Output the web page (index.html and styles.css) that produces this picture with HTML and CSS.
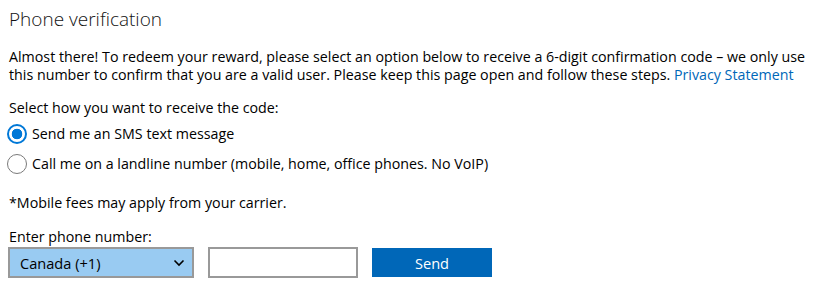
FILE: index.html
```html
<!DOCTYPE html>
<html>
<head>
<meta charset="utf-8">
<link rel="stylesheet" href="styles.css">
</head>
<body>
<div class="page">
  <h1 class="title">Phone verification</h1>
  <p class="intro">Almost there! To redeem your reward, please select an option below to receive a 6-digit confirmation code – we only use this number to confirm that you are a valid user. Please keep this page open and follow these steps. <a class="link" href="#">Privacy Statement</a></p>
  <p class="label">Select how you want to receive the code:</p>
  <div class="options">
    <label class="option"><span class="radio checked"></span><span>Send me an SMS text message</span></label>
    <label class="option"><span class="radio"></span><span>Call me on a landline number (mobile, home, office phones. No VoIP)</span></label>
  </div>
  <p class="note">*Mobile fees may apply from your carrier.</p>
  <p class="label small">Enter phone number:</p>
  <div class="form-row">
    <div class="select"><span>Canada (+1)</span><svg class="chev" width="12" height="8" viewBox="0 0 12 8"><path d="M1.5 1.5 L6 6 L10.5 1.5" fill="none" stroke="#000" stroke-width="1.6"/></svg></div>
    <div class="input"></div>
    <button class="send">Send</button>
  </div>
</div>
</body>
</html>
```
FILE: styles.css
```css
html, body { margin: 0; padding: 0; background: #fff; }
body { font-family: "Open Sans", "Noto Sans", sans-serif; color: #000; font-size: 14.25px; }
.page { padding: 5px 9px 0 9px; }
.title { font-size: 19px; font-weight: 300; color: #111; margin: 0; line-height: 28px; }
.intro { margin: 15px 0 0 0; line-height: 18px; width: 810px; }
.link { color: #0067b8; text-decoration: none; }
.label { margin: 15px 0 0 0; line-height: 18px; }
.options { display: flex; flex-direction: column; gap: 10px; margin-top: 7px; }
.option { display: flex; align-items: center; gap: 5px; line-height: 20px; margin-left: -2px; }
.radio { width: 20px; height: 20px; border: 1px solid #7a7a7a; border-radius: 50%; box-sizing: border-box; background: #fff; }
.radio.checked { border: 2px solid #0078d7; background: radial-gradient(circle, #0078d7 0 5px, #fff 5.6px); }
.note { margin: 20px 0 0 0; line-height: 18px; }
.label.small { margin-top: 16px; }
.form-row { display: flex; align-items: center; margin-top: 1px; margin-left: -1px; }
.select { width: 186px; height: 31px; box-sizing: border-box; border: 2px solid #999; background: #99cbf2; display: flex; align-items: center; justify-content: space-between; padding: 0 7px 0 10px; font-size: 14.6px; }
.input { width: 150px; height: 31px; box-sizing: border-box; border: 2px solid #999; background: #fff; margin-left: 14px; }
.send { margin-left: 14px; width: 120px; height: 29px; background: #0067b8; color: #fff; border: none; font-family: inherit; font-size: 14.6px; padding: 0; }
```
